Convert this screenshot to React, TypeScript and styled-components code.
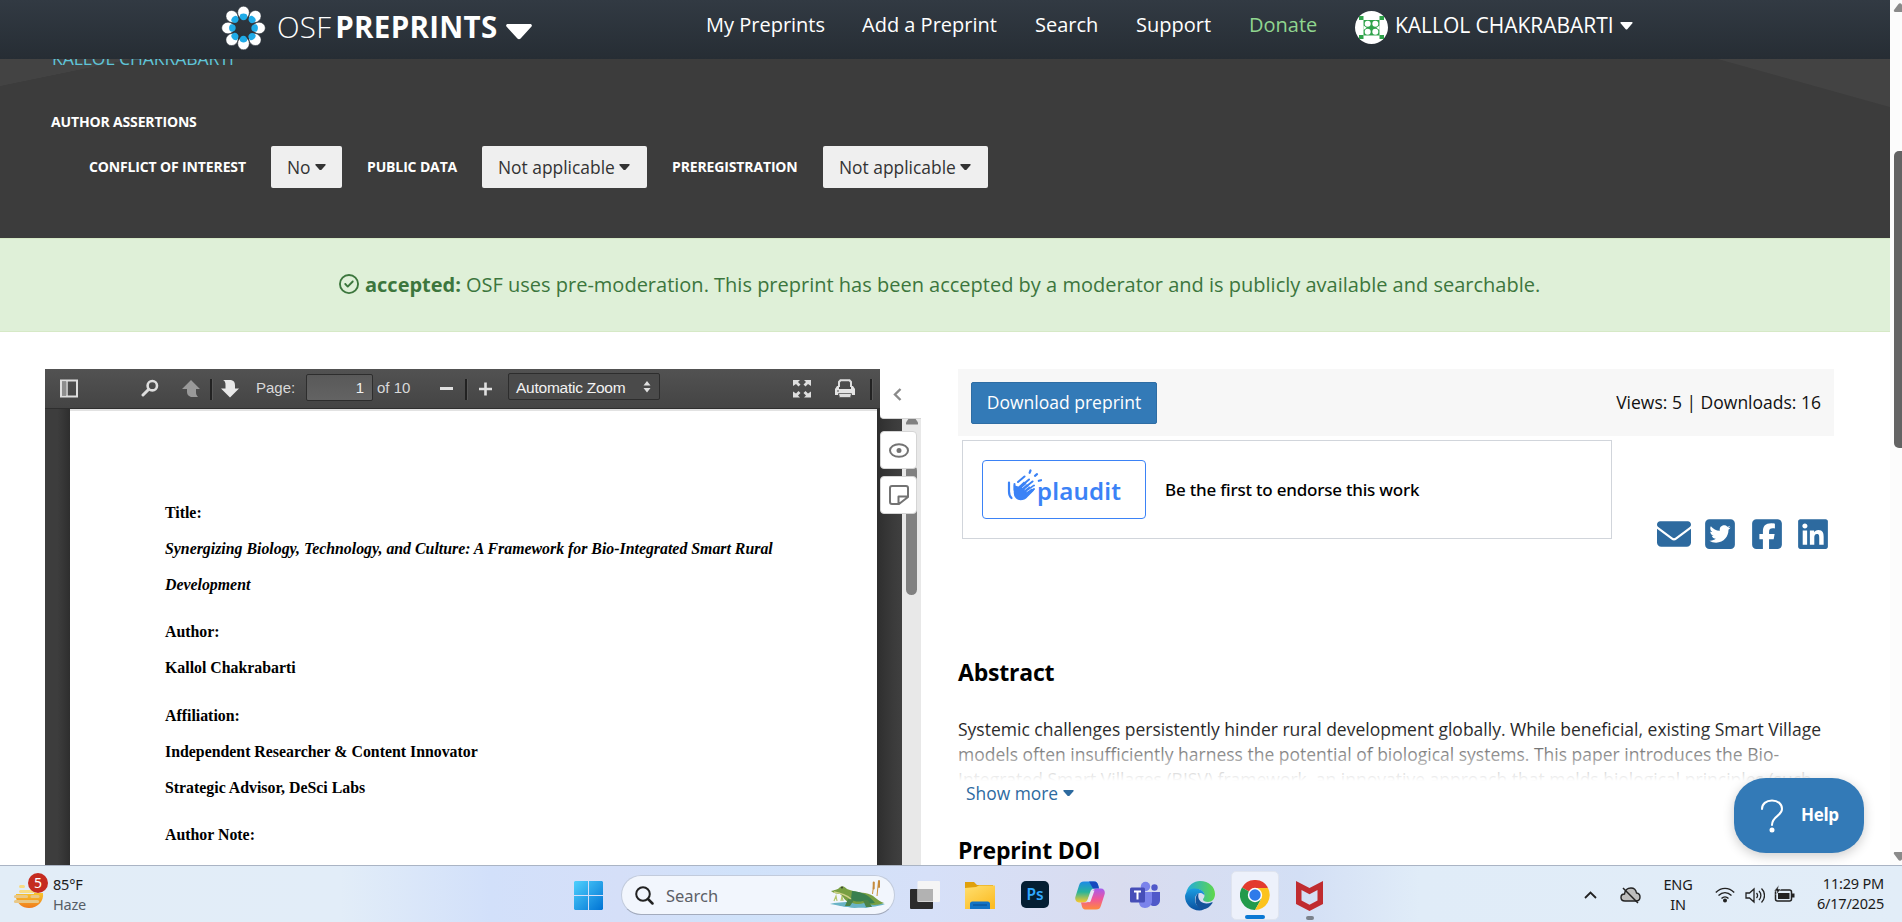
import React from "react";
import styled, { createGlobalStyle } from "styled-components";
import { FaEnvelope, FaSquareTwitter, FaSquareFacebook, FaLinkedin, FaRegCircleCheck } from "react-icons/fa6";

const Global = createGlobalStyle`
  *, *::before, *::after { box-sizing: border-box; }
  body { margin: 0; background: #fff; overflow: hidden; font-family: "Open Sans", "Noto Sans", sans-serif; }
  svg { display: block; flex: none; }
`;

const Screen = styled.div`
  display: flex;
  flex-direction: column;
  width: 1902px;
  height: 922px;
  overflow: hidden;
`;
const Browser = styled.div`
  display: flex;
  height: 865px;
  overflow: hidden;
`;
const Page = styled.div`
  display: flex;
  flex-direction: column;
  width: 1890px;
  height: 865px;
  position: relative;
  overflow: hidden;
`;

/* Header */
const Header = styled.header`
  display: flex;
  align-items: flex-start;
  flex: none;
  height: 59px;
  padding-left: 223px;
  background: linear-gradient(#323a43, #262d34);
  color: #fff;
  white-space: nowrap;
`;
const Logo = styled.svg`
  margin: 6px 11px 0 -2px;
`;
const Brand = styled.div`
  width: 229px;
  font-size: 29.5px;
  line-height: 54px;
  font-weight: 300;
  letter-spacing: 0.25px;
  b { font-weight: 700; margin-left: 4px; letter-spacing: 0.3px; }
`;
const BrandCaret = styled.svg`
  margin-top: 24px;
`;
const Nav = styled.nav`
  display: flex;
  gap: 38px;
  margin-left: 174px;
  font-size: 20px;
  line-height: 50px;
`;
const NavItem = styled.a<{ $w: number; $green?: boolean }>`
  width: ${(p) => p.$w}px;
  color: ${(p) => (p.$green ? "#90d68f" : "#fff")};
`;
const User = styled.div`
  display: flex;
  margin-left: 37px;
  font-size: 21px;
  line-height: 50px;
  svg:first-child { margin: 11px 7px 0 0; }
  svg:last-child { margin-top: 22px; }
`;
const UserName = styled.span`
  width: 225px;
  letter-spacing: -0.03px;
`;

/* Hero */
const Hero = styled.section`
  display: flex;
  flex-direction: column;
  flex: none;
  height: 179px;
  overflow: hidden;
  color: #fff;
  background:
    linear-gradient(to bottom right, #434343 49.5%, transparent 50.5%) 0 0 / 131px 27px no-repeat,
    linear-gradient(to bottom left, #434343 49.5%, transparent 50.5%) 100% 0 / 172px 48px no-repeat,
    #3c3c3c;
`;
const AuthorLink = styled.a`
  margin: -13px 0 0 52px;
  height: 25px;
  line-height: 25px;
  font-size: 17.5px;
  color: #5fc4d8;
  letter-spacing: -0.05px;
`;
const AssertTitle = styled.div`
  margin: 41px 0 0 51px;
  font-size: 14px;
  font-weight: 700;
  line-height: 20px;
  letter-spacing: -0.15px;
`;
const AssertRow = styled.div`
  display: flex;
  align-items: center;
  height: 42px;
  margin: 14px 0 0 89px;
`;
const AssertLabel = styled.span<{ $w: number }>`
  width: ${(p) => p.$w}px;
  font-size: 14px;
  font-weight: 700;
  line-height: 20px;
  letter-spacing: -0.14px;
  white-space: nowrap;
`;
const Select = styled.button<{ $w: number }>`
  display: flex;
  align-items: center;
  gap: 4px;
  width: ${(p) => p.$w}px;
  height: 42px;
  margin-right: 25px;
  padding: 0 0 0 16px;
  border: 0;
  border-radius: 2px;
  background: #efefef;
  color: #333;
  font: 400 17.4px/42px "Open Sans", sans-serif;
  white-space: nowrap;
`;

const Banner = styled.div`
  display: flex;
  align-items: center;
  flex: none;
  height: 94px;
  padding: 0 0 2px 339px;
  background: #dff0d8;
  border-top: 1px solid #d6e9c6;
  border-bottom: 1px solid #d6e9c6;
  color: #3c763d;
  font-size: 20px;
  white-space: nowrap;
  b { margin: 0 5px 0 6px; }
`;

/* Content */
const Content = styled.main`
  display: flex;
  flex: 1;
  padding: 37px 0 0 45px;
`;
const Viewer = styled.section`
  position: relative;
  width: 876px;
  height: 496px;
  margin-right: 37px;
  overflow: hidden;
`;
const Toolbar = styled.div`
  display: flex;
  align-items: flex-start;
  width: 835px;
  height: 40px;
  background: linear-gradient(#525252, #444);
  border-bottom: 1px solid #2e2e2e;
  color: #d9d9d9;
  font: 15px/26px "Liberation Sans", sans-serif;
  white-space: nowrap;
`;
const ToolIcon = styled.svg<{ $l?: number }>`
  margin: 10px 0 0 ${(p) => p.$l || 0}px;
`;
const ToolText = styled.span<{ $l: number; $w: number }>`
  margin: 6px 0 0 ${(p) => p.$l}px;
  width: ${(p) => p.$w}px;
`;
const Divider = styled.i<{ $l: number }>`
  width: 2px;
  height: 21px;
  margin: 10px 0 0 ${(p) => p.$l}px;
  background: #222;
  box-shadow: 1px 0 0 #585858;
`;
const PageInput = styled.div`
  width: 67px;
  height: 27px;
  margin: 5px 0 0 11px;
  padding-right: 8px;
  text-align: right;
  color: #f2f2f2;
  line-height: 26px;
  border: 1px solid #2d2d2d;
  border-radius: 2px;
  background: linear-gradient(#595959, #636363);
`;
const ZoomSelect = styled.div`
  display: flex;
  justify-content: space-between;
  width: 152px;
  height: 27px;
  margin: 4px 0 0 16px;
  padding: 0 8px 0 7px;
  color: #f2f2f2;
  font-size: 15.5px;
  line-height: 28px;
  border: 1px solid #2d2d2d;
  border-radius: 2px;
  background: #4a4a4a;
  letter-spacing: -0.25px;
  svg { margin-top: 7px; }
`;
const Canvas = styled.div`
  display: flex;
  height: 456px;
`;
const Gutter = styled.div`
  width: 25px;
  background: linear-gradient(90deg, #3d3d3d 0 50%, #2e2e2e);
  &:nth-child(3) { background: linear-gradient(90deg, #2e2e2e, #3a3a3a 60%, #404040); }
`;
const Paper = styled.article`
  width: 807px;
  padding: 83.6px 0 0 95px;
  background: #fff;
  border-top: 2px solid #e2e2e2;
  color: #000;
  font: bold 15.85px/36px "Liberation Serif", serif;
  white-space: nowrap;
`;
const Line = styled.p<{ $gap?: boolean; $italic?: boolean }>`
  height: 36.2px;
  margin: ${(p) => (p.$gap ? 11 : 0)}px 0 0;
  font-style: ${(p) => (p.$italic ? "italic" : "normal")};
`;
const ViewerScroll = styled.div`
  width: 19px;
  padding: 9px 0 0 4px;
  background: #e8e8e8;
`;
const ViewerThumb = styled.div`
  width: 11px;
  height: 130px;
  margin-top: 40px;
  background: #808080;
  border-radius: 6px;
`;
const SideTab = styled.div`
  position: absolute;
  left: 835px;
  top: 0;
  display: flex;
  flex-direction: column;
`;
const TabTop = styled.div`
  display: flex;
  align-items: center;
  width: 41px;
  height: 50px;
  padding: 1px 0 0 13px;
  background: #fff;
  border-radius: 0 0 0 4px;
  border-bottom: 1px solid #d5d5d5;
  margin-bottom: 12px;
`;
const TabButton = styled.div`
  display: flex;
  align-items: center;
  justify-content: center;
  width: 37px;
  height: 38px;
  margin-bottom: 7px;
  border: 1px solid #d5d5d5;
  border-radius: 4px;
  background: #fff;
`;

const Details = styled.section`
  width: 876px;
`;
const DownloadBar = styled.div`
  display: flex;
  align-items: center;
  justify-content: space-between;
  height: 67px;
  padding: 0 13px;
  background: #f7f7f7;
  font-size: 17.5px;
  color: #111;
`;
const Download = styled.button`
  width: 186px;
  height: 42px;
  padding: 0;
  border: 1px solid #2e6da4;
  border-radius: 2px;
  background: #337ab7;
  color: #fff;
  font: 400 17.5px/37px "Open Sans", sans-serif;
`;
const Stats = styled.span`
  margin-top: -2px;
`;
const EndorseRow = styled.div`
  display: flex;
  height: 216px;
  margin: 4px 0 0 4px;
`;
const Endorse = styled.div`
  display: flex;
  align-items: center;
  width: 650px;
  height: 99px;
  padding-left: 19px;
  border: 1px solid #d1d5db;
  font: 500 17px/24px "Noto Sans", sans-serif;
  letter-spacing: -0.21px;
  color: #000;
`;
const Plaudit = styled.div`
  display: flex;
  width: 164px;
  height: 59px;
  margin-right: 19px;
  padding: 7px 0 0 24px;
  border: 1px solid #3b82f6;
  border-radius: 4px;
  color: #3b82f6;
  font: 600 24px/46px "Noto Sans", sans-serif;
  letter-spacing: 0.2px;
  svg { margin-right: -6px; }
`;
const Share = styled.div`
  display: flex;
  gap: 12.3px;
  margin: 77px 0 0 45px;
  color: #2d6a9f;
  font-size: 34px;
`;
const SectionTitle = styled.h2`
  height: 32px;
  margin: 0;
  font-size: 23px;
  font-weight: 700;
  line-height: 32px;
  letter-spacing: -0.2px;
  color: #000;
`;
const Abstract = styled.p`
  position: relative;
  height: 64px;
  margin: 29px 0 0;
  overflow: hidden;
  color: #222;
  font-size: 17.5px;
  line-height: 25px;
  white-space: nowrap;
  &::after {
    content: "";
    position: absolute;
    inset: 0;
    background: linear-gradient(rgba(255,255,255,0) 18%, #fff 100%);
  }
`;
const ShowMore = styled.a`
  display: flex;
  align-items: center;
  gap: 5px;
  height: 24px;
  margin: 0 0 29px 8px;
  font-size: 17.4px;
  color: #2d6a9f;
`;
const Help = styled.div`
  position: absolute;
  left: 1734px;
  top: 778px;
  display: flex;
  align-items: center;
  width: 130px;
  height: 75px;
  padding-left: 26px;
  border-radius: 32px / 30px;
  background: #337ab7;
  box-shadow: 0 3px 12px rgba(0,0,0,0.2);
  color: #fff;
  font-weight: 700;
  font-size: 17px;
  span { margin: -2px 0 0 17px; letter-spacing: -0.3px; }
`;
const PageScroll = styled.div`
  display: flex;
  flex-direction: column;
  justify-content: space-between;
  width: 12px;
  padding: 3px 0 4px 3px;
  background: #fcfcfc;
`;
const PageThumb = styled.div`
  width: 9px;
  height: 297px;
  margin: 139px 0 auto 1px;
  background: #636363;
  border-radius: 5px 0 0 5px;
`;

/* Taskbar */
const Taskbar = styled.footer`
  display: flex;
  height: 57px;
  border-top: 1px solid #aab4c4;
  background: linear-gradient(90deg, #e2edf7 0, #e2edf8 340px, #d2e0fa 490px, #d5dff8 620px, #d0e2fa 740px, #d6e0f8 930px, #d9dcef 1120px, #d3dff5 1300px, #e0ecf8 1420px, #e2edf8 1902px);
  font-family: "Noto Sans", "Open Sans", sans-serif;
  color: #1b1b1b;
`;
const Weather = styled.div`
  display: flex;
  width: 574px;
  padding: 7px 0 0 13px;
`;
const Stack = styled.div<{ $align?: string; $top?: number }>`
  display: flex;
  flex-direction: column;
  align-items: ${(p) => p.$align || "flex-start"};
  margin-top: ${(p) => p.$top || 0}px;
  font-size: 14.5px;
  line-height: 20px;
  letter-spacing: -0.2px;
  white-space: nowrap;
  span:nth-child(2) { color: ${(p) => (p.$align ? "inherit" : "#565d66")}; }
`;
const Apps = styled.div`
  display: flex;
  align-items: flex-start;
  padding-top: 15px;
  width: 1008px;
`;
const SearchPill = styled.div`
  display: flex;
  align-items: center;
  width: 274px;
  height: 40px;
  margin: -6px 15px 0 18px;
  padding: 0 7px 0 13px;
  border: 1px solid #c2cbdc;
  border-bottom-color: #a3abbd;
  border-radius: 20px;
  background: #f2f6fd;
  color: #5d6066;
  font-size: 16.5px;
  svg:last-child { margin-left: auto; }
  span { margin: 0 0 0 12px; }
`;
const AppIcon = styled.svg<{ $r?: number }>`
  margin-right: ${(p) => (p.$r === undefined ? 25 : p.$r)}px;
`;
const ActiveApp = styled.div`
  display: flex;
  flex-direction: column;
  align-items: center;
  width: 48px;
  height: 49px;
  margin: -10px 17px 0 -9px;
  padding-top: 8px;
  border: 1px solid #dfe4ef;
  border-radius: 5px;
  background: #edf1fb;
`;
const Indicator = styled.i<{ $w: number; $c: string }>`
  width: ${(p) => p.$w}px;
  height: 4px;
  margin-top: 5px;
  border-radius: 2px;
  background: ${(p) => p.$c};
`;
const Column = styled.div`
  display: flex;
  flex-direction: column;
  align-items: center;
`;
const Tray = styled.div`
  display: flex;
  align-items: flex-start;
  flex: 1;
  padding: 7px 18px 0 2px;
`;
const TrayIcon = styled.svg<{ $r: number; $t: number }>`
  margin: ${(p) => p.$t}px ${(p) => p.$r}px 0 0;
`;
const Language = styled.div`
  width: 36px;
  margin: 0 19px 0 1px;
`;
const Clock = styled.div`
  margin-left: auto;
`;

const Caret = ({ w = 11, c = "#333" }: { w?: number; c?: string }) => (
  <svg width={w} height={w * 0.6} viewBox="0 0 20 12">
    <path d="M1.8 0h16.4c1.2 0 1.7 1.2.9 2.1l-7.9 9c-.7.8-1.7.8-2.4 0L.9 2.1C.1 1.2.6 0 1.8 0z" fill={c} />
  </svg>
);

const OsfLogo = () => (
  <Logo width="45" height="44" viewBox="-22.5 -22 45 44">
    {[45, 135, 225, 315, 0, 90, 180, 270].map((a) => (
      <g key={a} transform={`rotate(${a}) translate(0 ${a % 90 ? -0.8 : 0})`}>
        <ellipse cx="0" cy="-15.5" rx="5.8" ry="6.3" fill="#fff" stroke="#2c343c" strokeWidth=".5" />
        <path d="M-3.7-12C-3.7-15.200 3.700-15.200 3.700-12S2.200-7.800 0-7.800-3.700-9.500-3.700-12z" fill="#1fabe8" />
      </g>
    ))}
  </Logo>
);

const Avatar = () => (
  <svg width="33" height="33" viewBox="0 0 33 33">
    <circle cx="16.5" cy="16.5" r="16.5" fill="#fff" />
    <g fill="#2fa24a">
      <path d="M4 5h4.500v4H4zM24.500 5H29v4h-4.500zM4 24h4.500v4H4zM24.500 24H29v4h-4.500z" />
      <path d="M8.500 9h16v15.500h-16z" />
    </g>
    <g fill="#fff">
      <circle cx="12.700" cy="12.700" r="3" /><circle cx="20.300" cy="12.700" r="3" />
      <circle cx="12.700" cy="20.800" r="3" /><circle cx="20.300" cy="20.800" r="3" />
      <path d="M8.500 14.500l3.200 2.200-3.200 2.300zM24.500 14.500l-3.200 2.200 3.200 2.300z" />
    </g>
  </svg>
);

const Clap = () => (
  <svg width="36" height="34" viewBox="0 0 36 34" fill="none" stroke="#3b82f6" strokeLinecap="round">
    <path d="M2 14.500v9c0 3 .8 5 2.500 6.500" strokeWidth="2.200" />
    <path d="M7.500 18v7c0 3.500 2.500 6.500 6 6.500 3 0 4.800-1 6.500-3l6-6-9-8-5.500 5z" fill="#3b82f6" strokeWidth="1.500" />
    <path d="M7.500 16v6M12 20l10-8.500M15 22l10.500-8.500M18 24l9-6.500M20 26l7-5M11 14l6.500-5.500" strokeWidth="2" />
    <path d="M15.500 19.500l9-7.500M18 21.500l8.500-6.800M20 23.500l7-4.800" stroke="#fff" strokeWidth=".7" />
    <path d="M23.500 2.500l-.9 2.300M30 6.200l-2 1.700M34 12.200l-2.200.6" strokeWidth="2.200" />
  </svg>
);

const Crocodile = () => (
  <svg width="58" height="32" viewBox="0 0 58 32">
    <path d="M1 25c10-3 43-2 55 0-7 3-13 2-19 4-6-1-12 1-18-1-6 0-9-2-18-3z" fill="#69b3c5" />
    <path d="M5 22l2-5 1 5M12 22l1-5 1 5" stroke="#b5c66b" strokeWidth="1.200" fill="none" />
    <path d="M2 12c3-1 7-1 9-4 3-2 5 0 7 2 8 3 12 3 18 4 9 1 12 8 19 10-7 3-14 2-20 0-5 2-10 1-14-1-5 0-6-5-10-8-3 0-7-1-9-3z" fill="#789f42" />
    <path d="M23 12c11 1 17 4 23 12-5 1-9 0-12-2-4 1-9 1-12-2z" fill="#39804f" />
    <path d="M5 13c6 1 11 2 17 7" stroke="#cfd189" strokeWidth="1.500" fill="none" />
    <path d="M19 20l-3 7h5l4-6M34 21l3 7h6l-4-7" fill="#4a8348" />
    <path d="M43.500 15L45 3M48 17l1.500-15" stroke="#c99139" strokeWidth="1" fill="none" />
    <path d="M44.700 3.500v6M50 2v6" stroke="#c58a3c" strokeWidth="2" strokeLinecap="round" />
    <circle cx="13" cy="8.500" r=".9" fill="#333" />
  </svg>
);

export default function App() {
  return (
    <Screen>
      <Global />
      <Browser>
        <Page>
          <Header>
            <OsfLogo />
            <Brand>OSF<b>PREPRINTS</b></Brand>
            <BrandCaret width="26" height="16" viewBox="0 0 26 16">
              <path d="M2 0h22c1.800 0 2.500 1.500 1.300 2.800l-10.700 11.600c-1 1-2.200 1-3.200 0L.7 2.800C-.5 1.500.2 0 2 0z" fill="#fff" />
            </BrandCaret>
            <Nav>
              <NavItem $w={118}>My Preprints</NavItem>
              <NavItem $w={135}>Add a Preprint</NavItem>
              <NavItem $w={63}>Search</NavItem>
              <NavItem $w={75}>Support</NavItem>
              <NavItem $w={69} $green>Donate</NavItem>
            </Nav>
            <User>
              <Avatar />
              <UserName>KALLOL CHAKRABARTI</UserName>
              <Caret w={13} c="#fff" />
            </User>
          </Header>
          <Hero>
            <AuthorLink>KALLOL CHAKRABARTI</AuthorLink>
            <AssertTitle>AUTHOR ASSERTIONS</AssertTitle>
            <AssertRow>
              <AssertLabel $w={182}>CONFLICT OF INTEREST</AssertLabel>
              <Select $w={71}>No <Caret /></Select>
              <AssertLabel $w={115}>PUBLIC DATA</AssertLabel>
              <Select $w={165}>Not applicable <Caret /></Select>
              <AssertLabel $w={151}>PREREGISTRATION</AssertLabel>
              <Select $w={165}>Not applicable <Caret /></Select>
            </AssertRow>
          </Hero>
          <Banner>
            <FaRegCircleCheck size={20} />
            <b>accepted:</b>
            <span>OSF uses pre-moderation. This preprint has been accepted by a moderator and is publicly available and searchable.</span>
          </Banner>
          <Content>
            <Viewer>
              <Toolbar>
                <ToolIcon $l={15} width="18" height="19" viewBox="0 0 18 19">
                  <path d="M1 1.500h16v16H1z" fill="none" stroke="#dedede" strokeWidth="2" />
                  <path d="M2 3h4v13H2z" fill="#8d8d8d" /><path d="M7 2v15" stroke="#dedede" strokeWidth="1.500" />
                </ToolIcon>
                <ToolIcon $l={63} width="18" height="18" viewBox="0 0 18 18">
                  <circle cx="11.300" cy="6.700" r="4.700" fill="none" stroke="#dedede" strokeWidth="2.600" />
                  <path d="M7.500 10.500L2 16" stroke="#dedede" strokeWidth="3" strokeLinecap="round" />
                </ToolIcon>
                <ToolIcon $l={23} width="18" height="19" viewBox="0 0 18 19">
                  <path d="M9 1l9 9h-4v3c0 2 .5 3.500 2 5H9c-3-1-4-3-4-5v-3H0z" fill="#999" />
                </ToolIcon>
                <Divider $l={10} />
                <ToolIcon $l={9} width="18" height="19" viewBox="0 0 18 19">
                  <path d="M9 18.500l9-9h-4v-3c0-3-1-5-4-5.500H2c2 1 2.500 2.500 2.500 5v3.500H0z" fill="#e8e8e8" />
                </ToolIcon>
                <ToolText $l={17} $w={39}>Page:</ToolText>
                <PageInput>1</PageInput>
                <ToolText $l={4} $w={34}>of 10</ToolText>
                <ToolIcon $l={29} width="13" height="19" viewBox="0 0 13 19"><path d="M0 9.500h13" stroke="#e0e0e0" strokeWidth="3" /></ToolIcon>
                <Divider $l={12} />
                <ToolIcon $l={12} width="13" height="19" viewBox="0 0 13 19"><path d="M0 10h13M6.500 3.500v13" stroke="#e0e0e0" strokeWidth="2.600" /></ToolIcon>
                <ZoomSelect>
                  Automatic Zoom
                  <svg width="8" height="12" viewBox="0 0 8 12"><path d="M4 0l3.500 4.500h-7zM4 11.500L.5 7h7z" fill="#e0e0e0" /></svg>
                </ZoomSelect>
                <ToolIcon $l={133} width="18" height="19" viewBox="0 0 18 19">
                  <path d="M0 1h7L5 3l2.500 2.500-2 2L3 5 0 7zM18 1h-7l2 2-2.500 2.500 2 2L15 5l3 2zM0 18.500h7l-2-2L7.500 14l-2-2L3 14.500l-3-2zM18 18.500h-7l2-2-2.500-2.500 2-2 2.500 2.500 3-2z" fill="#dedede" />
                </ToolIcon>
                <ToolIcon $l={24} width="20" height="19" viewBox="0 0 20 19">
                  <path d="M4 8V3l1.500-1.700h9L16 3v5" fill="none" stroke="#dedede" strokeWidth="2" />
                  <path d="M2 7h2v3h12V7h2l2 3v6h-3v-1H3v1H0v-6z" fill="#e4e4e4" />
                  <path d="M3.500 14.500h13l-1 4h-11z" fill="#dedede" stroke="#555" strokeWidth=".8" />
                  <path d="M2 12h2" stroke="#555" />
                </ToolIcon>
                <Divider $l={15} />
              </Toolbar>
              <Canvas>
                <Gutter />
                <Paper>
                  <Line>Title:</Line>
                  <Line $italic>Synergizing Biology, Technology, and Culture: A Framework for Bio-Integrated Smart Rural</Line>
                  <Line $italic>Development</Line>
                  <Line $gap>Author:</Line>
                  <Line>Kallol Chakrabarti</Line>
                  <Line $gap>Affiliation:</Line>
                  <Line>Independent Researcher &amp; Content Innovator</Line>
                  <Line>Strategic Advisor, DeSci Labs</Line>
                  <Line $gap>Author Note:</Line>
                </Paper>
                <Gutter />
                <ViewerScroll>
                  <svg width="12" height="7" viewBox="0 0 12 7"><path d="M3 0h6l3 4.500c.5 1.500 0 2-1 2H1c-1 0-1.500-.5-1-2z" fill="#808080" /></svg>
                  <ViewerThumb />
                </ViewerScroll>
              </Canvas>
              <SideTab>
                <TabTop>
                  <svg width="9" height="13" viewBox="0 0 9 13"><path d="M7.500 1L2 6.500 7.500 12" fill="none" stroke="#8a8a8a" strokeWidth="2.400" /></svg>
                </TabTop>
                <TabButton>
                  <svg width="20" height="15" viewBox="0 0 20 15" fill="none" stroke="#737373" strokeWidth="2">
                    <path d="M1 7.500C1 4 5 1.200 10 1.200S19 4 19 7.500 15 13.800 10 13.800 1 11 1 7.500z" /><circle cx="10" cy="7.500" r="1.500" fill="#737373" />
                  </svg>
                </TabButton>
                <TabButton>
                  <svg width="20" height="20" viewBox="0 0 20 20" fill="none" stroke="#737373" strokeWidth="2">
                    <path d="M3 1h14c1.300 0 2 .7 2 2v9l-9 7H3c-1.300 0-2-.7-2-2V3c0-1.300.7-2 2-2zM9.500 18.500v-7H19" strokeLinejoin="round" />
                  </svg>
                </TabButton>
              </SideTab>
            </Viewer>
            <Details>
              <DownloadBar>
                <Download>Download preprint</Download>
                <Stats>Views: 5 | Downloads: 16</Stats>
              </DownloadBar>
              <EndorseRow>
                <Endorse>
                  <Plaudit><Clap />plaudit</Plaudit>
                  Be the first to endorse this work
                </Endorse>
                <Share>
                  <FaEnvelope /><FaSquareTwitter /><FaSquareFacebook /><FaLinkedin />
                </Share>
              </EndorseRow>
              <SectionTitle>Abstract</SectionTitle>
              <Abstract>
                Systemic challenges persistently hinder rural development globally. While beneficial, existing Smart Village<br />
                models often insufficiently harness the potential of biological systems. This paper introduces the Bio-<br />
                Integrated Smart Villages (BISV) framework, an innovative approach that melds biological principles (such
              </Abstract>
              <ShowMore>Show more <Caret c="#2d6a9f" /></ShowMore>
              <SectionTitle>Preprint DOI</SectionTitle>
            </Details>
          </Content>
          <Help>
            <svg width="24" height="34" viewBox="0 0 24 34" fill="none" stroke="#fff" strokeWidth="2">
              <path d="M2 10C2 5 6 1.500 12 1.500S22 5 22 10c0 7-10 7-10 16" strokeLinecap="round" /><circle cx="12" cy="31" r="1.500" fill="#fff" />
            </svg>
            <span>Help</span>
          </Help>
        </Page>
        <PageScroll>
          <svg width="14" height="9" viewBox="0 0 14 9"><path d="M5.500 1c.8-1 2.200-1 3 0L13 7c.5 1 0 2-1 2H2C1 9 .5 8 1 7z" fill="#8a8a8a" /></svg>
          <PageThumb />
          <svg width="14" height="9" viewBox="0 0 14 9"><path d="M5.500 8c.8 1 2.200 1 3 0L13 2c.5-1 0-2-1-2H2C1 0 .5 1 1 2z" fill="#8a8a8a" /></svg>
        </PageScroll>
      </Browser>
      <Taskbar>
        <Weather>
          <svg width="40" height="42" viewBox="0 0 40 42">
            <defs><linearGradient id="sun" x2="0" y2="1"><stop offset="0" stopColor="#f8c62e" /><stop offset="1" stopColor="#f07a1c" /></linearGradient></defs>
            <path d="M3 20h27c1 8-5 15-14 15C9 35 4 30 3 25z" fill="url(#sun)" />
            <path d="M0 18h21v3H0z" fill="#e2edf7" />
            <g stroke="#f7dc84" strokeWidth="3" strokeLinecap="round"><path d="M7.500 13.500h3M7.500 18.500h14" /></g>
            <g stroke="#e9c887" strokeWidth="3.200" strokeLinecap="round"><path d="M2.500 23.500h11M19 23.500h6M2.500 28.500h22" /></g>
            <circle cx="25" cy="10" r="10" fill="#c52b20" />
            <text x="25" y="15" fill="#fff" fontSize="14" textAnchor="middle">5</text>
          </svg>
          <Stack $top={1}>
            <span>85°F</span><span>Haze</span>
          </Stack>
        </Weather>
        <Apps>
          <AppIcon $r={0} width="29" height="29" viewBox="0 0 29 29">
            <defs><linearGradient id="win" x2="1" y2="1"><stop offset="0" stopColor="#4fd0fd" /><stop offset="1" stopColor="#0073d4" /></linearGradient></defs>
            <path d="M1 0h13v14H0V1zM15 0h13l1 1v13H15zM0 15h14v14H1l-1-1zM15 15h14v13l-1 1H15z" fill="url(#win)" />
          </AppIcon>
          <SearchPill>
            <svg width="19" height="19" viewBox="0 0 19 19" fill="none" stroke="#222">
              <circle cx="8" cy="8" r="6.800" strokeWidth="2" /><path d="M13 13l4.500 4.500" strokeWidth="2.500" strokeLinecap="round" />
            </svg>
            <span>Search</span>
            <Crocodile />
          </SearchPill>
          <AppIcon width="30" height="29" viewBox="0 0 30 29">
            <rect y="8" width="23" height="20" rx="1" fill="#2b2b2b" /><rect x="7.500" width="22.500" height="21" rx="1" fill="#f5f5f5" /><path d="M7.500 8H23v12.500H7.500z" fill="#b2b2b2" />
          </AppIcon>
          <AppIcon width="30" height="29" viewBox="0 0 30 29">
            <defs><linearGradient id="fold" x2=".7" y2="1"><stop offset="0" stopColor="#ffdf70" /><stop offset="1" stopColor="#fcbd25" /></linearGradient></defs>
            <path d="M0 1h9l3 3h16v8H0z" fill="#e0a00c" /><path d="M0 7l11-1 3-1.500h16V28H0z" fill="url(#fold)" />
            <path d="M5 28v-5c0-1.500.8-2.500 2.500-2.500h15c1.700 0 2.500 1 2.500 2.500v5z" fill="#1273c5" /><path d="M8 24h14" stroke="#064b8c" />
          </AppIcon>
          <AppIcon width="30" height="29" viewBox="0 0 30 29">
            <rect x="1" width="28" height="27" rx="5" fill="#041e33" />
            <text x="15" y="19" fill="#31a8ff" fontSize="15.500" fontWeight="600" textAnchor="middle">Ps</text>
          </AppIcon>
          <AppIcon width="30" height="29" viewBox="0 0 30 28">
            <defs>
              <linearGradient id="ca" x2="0" y2="1"><stop offset="0" stopColor="#1e8ae8" /><stop offset=".5" stopColor="#28b49a" /><stop offset="1" stopColor="#ffc928" /></linearGradient>
              <linearGradient id="cb" x2="0" y2="1"><stop offset="0" stopColor="#a55cf0" /><stop offset=".5" stopColor="#f0569a" /><stop offset="1" stopColor="#ff8a3c" /></linearGradient>
            </defs>
            <path d="M9 0h10c3 0 4 2 4.500 5l.5 2h-5c-2 0-3 1-4 4l-2 6c-1 3-3 4-5 4H4c-3 0-4.500-3-3.500-6L4 4c1-3 2-4 5-4z" fill="url(#ca)" />
            <path d="M14 0h5c3 0 4 2 4.500 5l.5 2h-6z" fill="#1649be" />
            <path d="M21 28H11c-3 0-4-2-4.500-5L6 21h5c2 0 3-1 4-4l2-6c1-3 3-4 5-4h4c3 0 4.500 3 3.500 6L26 24c-1 3-2 4-5 4z" fill="url(#cb)" />
            <path d="M12.500 19l4-10h3l-4 11c-.8 1-3 1-3-1z" fill="#e7e6f5" />
          </AppIcon>
          <AppIcon width="30" height="29" viewBox="0 0 30 29">
            <circle cx="15.500" cy="5.500" r="4.700" fill="#7b83eb" /><circle cx="24.500" cy="6.500" r="3.200" fill="#5059c9" />
            <path d="M19 11h11v8c0 4-3 6-6 6s-5-2-5-5z" fill="#5059c9" /><path d="M9 11h13v9c0 4-3 7-7 7s-6-3-6-6z" fill="#7b83eb" />
            <rect y="6.500" width="15" height="15" rx="1.500" fill="#464eb8" /><path d="M4 10.500h7M7.500 10.500v8" stroke="#fff" strokeWidth="2" />
          </AppIcon>
          <AppIcon width="30" height="30" viewBox="0 0 30 30">
            <defs>
              <linearGradient id="ea" x2="1"><stop offset="0" stopColor="#21a9e1" /><stop offset="1" stopColor="#5fd84a" /></linearGradient>
              <linearGradient id="eb" x2="0" y2="1"><stop offset="0" stopColor="#1b9de2" /><stop offset="1" stopColor="#0a4f9e" /></linearGradient>
            </defs>
            <path d="M1 12C3 4 9 0 15 0c9 0 15 6 15 13 0 5-3 8-7 8-3 0-5-1-5-2.500 0-1 1.500-1.500 1.500-4C19.500 11 16 8 11 8 6 8 3 10 1 12z" fill="url(#ea)" />
            <path d="M0 15C1 10 5 7.500 10 7.500c5.500 0 9.500 3 9.500 7-1.500-2-3-2.500-4.500-2.500-3 0-5 3-5 6.500 0 6 5 9 9 9.500-1.500 1-3 1.500-4.500 1.500C6 29.500 0 23 0 15z" fill="url(#eb)" />
            <path d="M13.500 12C9 15 9 27 18 28.500c4-.5 7-3 9.500-6.500.3-.5 0-1-.6-.8-6 2.500-12 1-13.400-4.200-.5-2 0-3.500 0-5z" fill="#13539b" />
          </AppIcon>
          <ActiveApp>
            <svg width="30" height="30" viewBox="0 0 30 30">
              <path d="M15 15L2 7.500A15 15 0 0128 7.500z" fill="#e33b2e" /><path d="M15 15L2 7.500A15 15 0 0015 30l6.500-11.500z" fill="#229a4b" />
              <path d="M15 8h13A15 15 0 0115 30l6-10.500z" fill="#fcc31d" /><circle cx="15" cy="15" r="7.200" fill="#fff" /><circle cx="15" cy="15" r="5.700" fill="#2f7bea" />
            </svg>
            <Indicator $w={20} $c="#0a78d4" />
          </ActiveApp>
          <Column>
            <svg width="27" height="30" viewBox="0 0 27 30">
              <path d="M0 0l13.500 7L27 0v23l-13.500 7L0 23zM5.500 9v10.500l8 4.200 8-4.200V9l-8 4.200z" fill="#c02c30" fillRule="evenodd" />
            </svg>
            <Indicator $w={8} $c="#7b828c" />
          </Column>
        </Apps>
        <Tray>
          <TrayIcon $t={18} $r={23} width="13" height="8" viewBox="0 0 13 8"><path d="M1 7l5.500-5.500L12 7" fill="none" stroke="#222" strokeWidth="1.800" /></TrayIcon>
          <TrayIcon $t={13} $r={18} width="21" height="18" viewBox="0 0 21 18">
            <path d="M5 15C2.500 15 1 13.500 1 11.500 1 9.500 2.500 8 4.500 8 5 4 8 2 11 2c3 0 5 2 5.500 5 2 .3 3.500 1.800 3.500 4s-1.500 4-4 4z" fill="#bdbdbd" stroke="#222" strokeWidth="1.400" /><path d="M3 2l15 15" stroke="#222" strokeWidth="1.500" />
          </TrayIcon>
          <Language>
            <Stack $align="center" $top={1}><span>ENG</span><span>IN</span></Stack>
          </Language>
          <TrayIcon $t={14} $r={10} width="20" height="16" viewBox="0 0 20 16" fill="none" stroke="#222" strokeWidth="1.400">
            <path d="M.8 5.500c5.500-5.500 13-5.500 18.400 0M3.500 8.500c4-3.800 9-3.800 13 0M6.500 11.500c2-2 5-2 7 0" /><circle cx="10" cy="13.500" r="1.300" fill="#222" />
          </TrayIcon>
          <TrayIcon $t={14} $r={9} width="20" height="17" viewBox="0 0 20 17" fill="none" stroke="#222" strokeWidth="1.300">
            <path d="M1 6h3.500l4.500-4v13l-4.500-4H1zM11.500 6c1.300 1.500 1.300 3.500 0 5M14 4c2.500 2.500 2.500 6.500 0 9M16.500 1.500c4 4 4 10 0 14" />
          </TrayIcon>
          <TrayIcon $t={12} $r={0} width="21" height="18" viewBox="0 0 21 18">
            <rect x="1.500" y="5" width="16" height="11" rx="2" fill="none" stroke="#222" strokeWidth="1.500" /><path d="M4 8h11.500v6H4zM18 8.500h2.500v4H18z" fill="#222" /><path d="M5 0L0 6h3l-1 4 5-6H4z" fill="#222" stroke="#e2edf8" strokeWidth=".5" />
          </TrayIcon>
          <Clock>
            <Stack $align="flex-end"><span>11:29 PM</span><span>6/17/2025</span></Stack>
          </Clock>
        </Tray>
      </Taskbar>
    </Screen>
  );
}
